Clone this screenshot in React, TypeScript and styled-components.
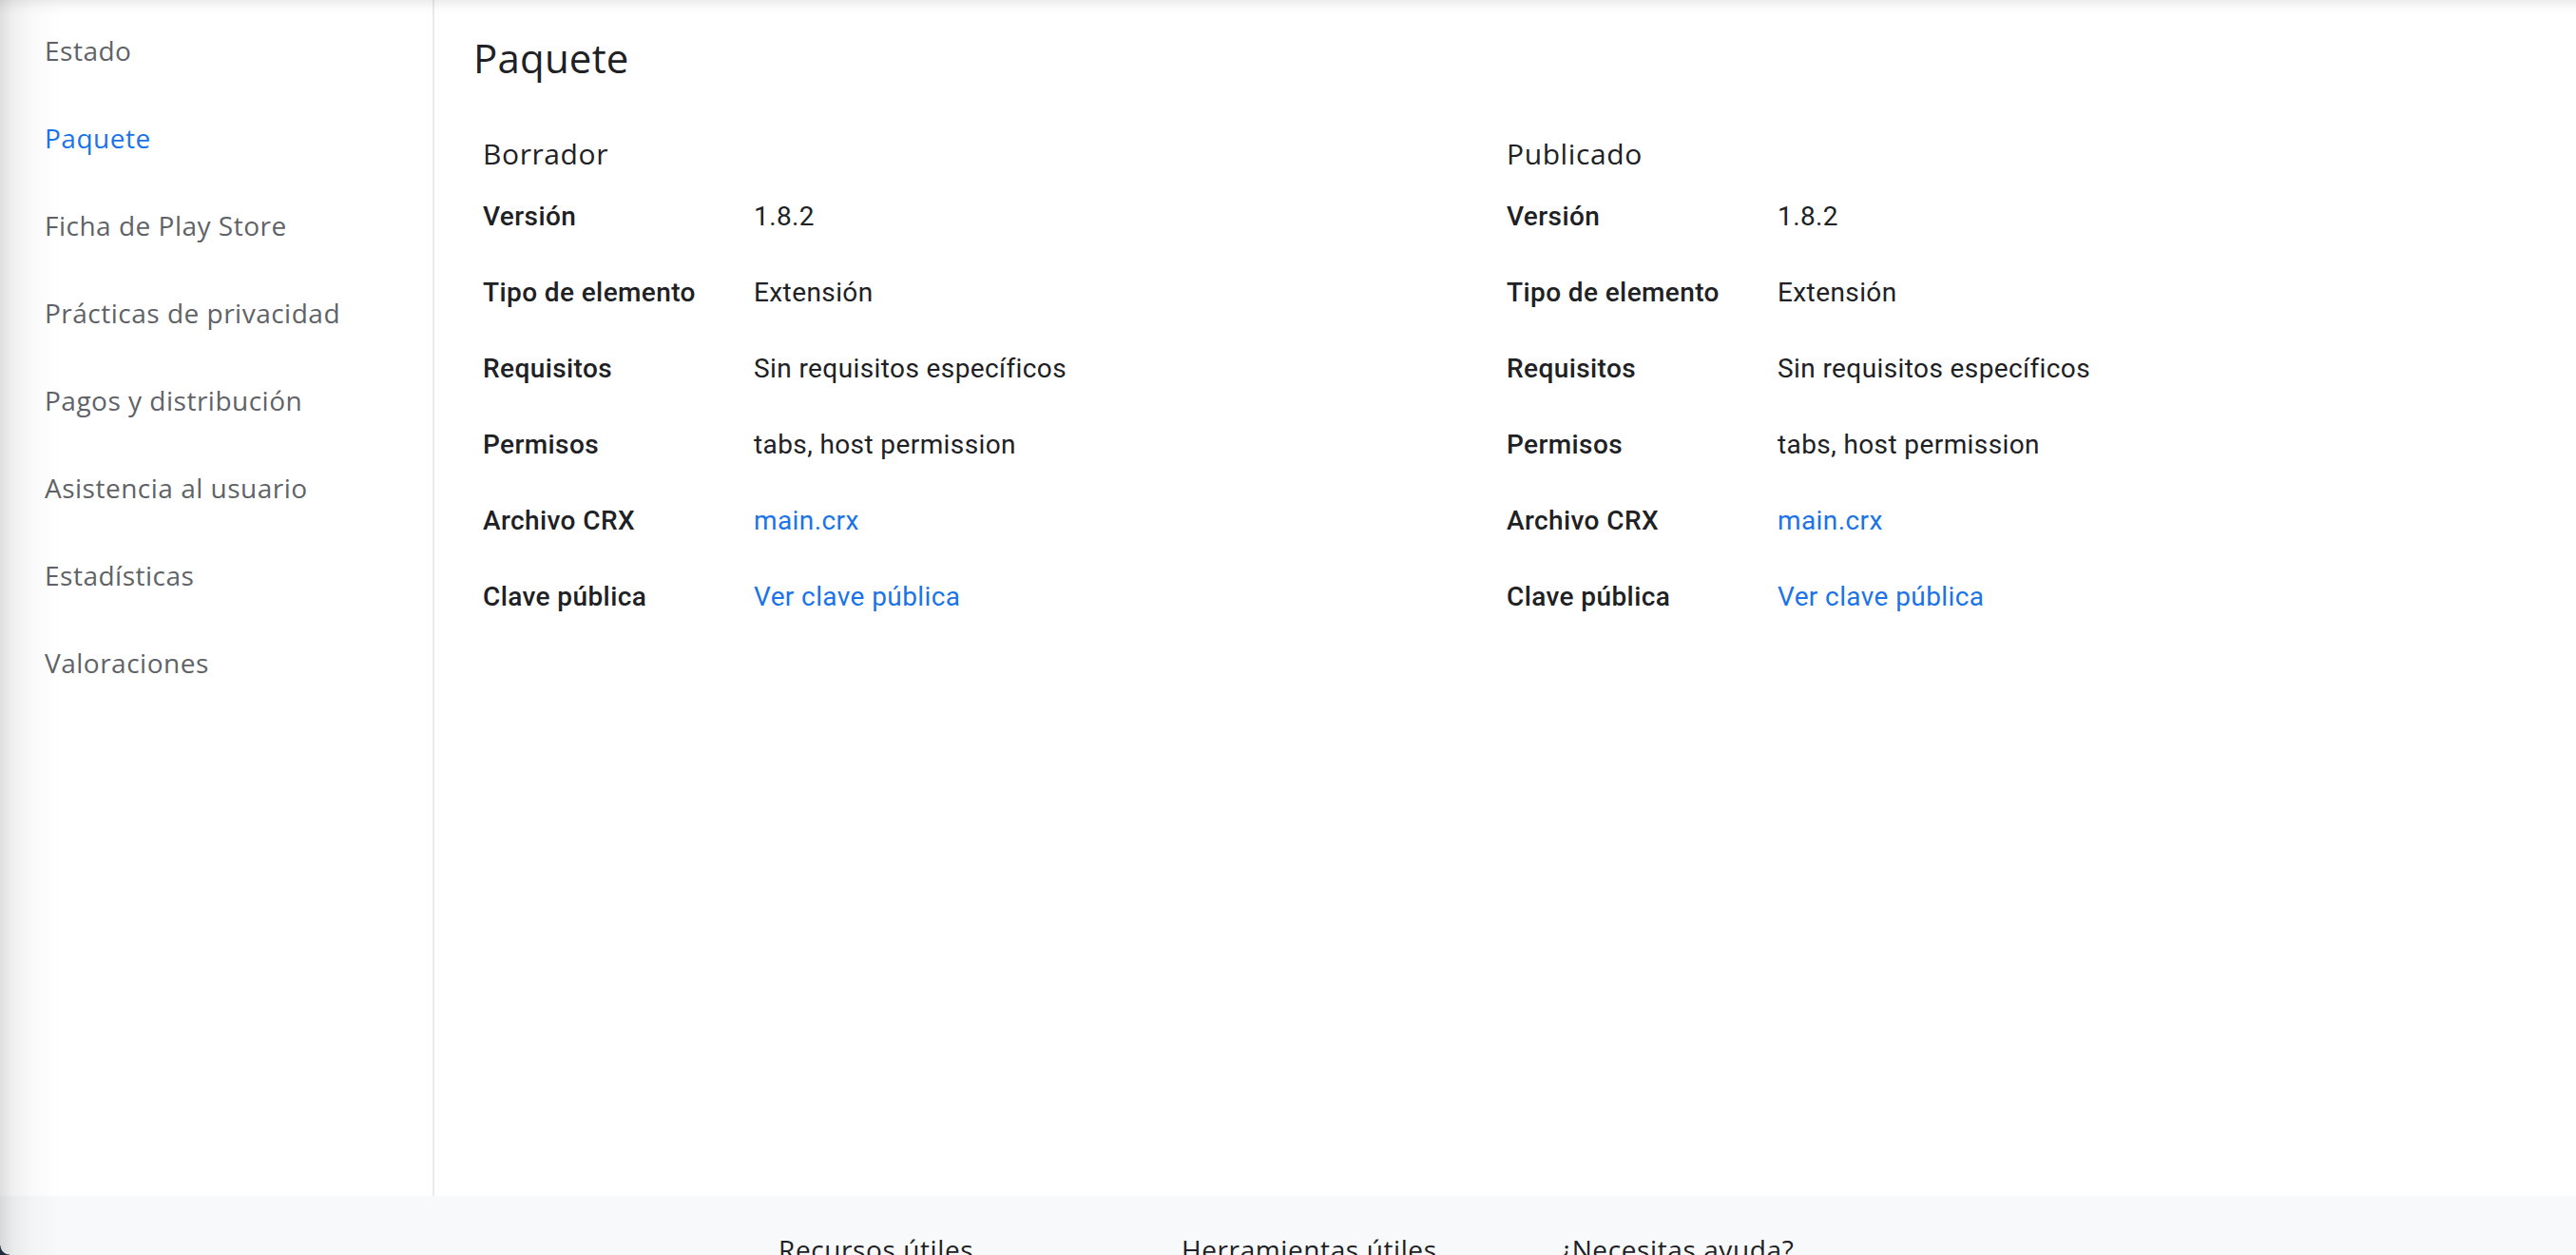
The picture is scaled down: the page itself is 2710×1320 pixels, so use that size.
import React from "react";
import styled, { createGlobalStyle } from "styled-components";

const Global = createGlobalStyle`
  html, body {
    margin: 0;
    padding: 0;
    background: #ffffff;
    overflow: hidden;
  }
  * { box-sizing: border-box; }
`;

const Page = styled.div`
  position: relative;
  width: 2710px;
  height: 1320px;
  display: flex;
  flex-direction: column;
  background: #ffffff;
  overflow: hidden;
  font-family: Roboto, "Liberation Sans", sans-serif;

  &::before {
    content: "";
    position: absolute;
    left: 0;
    top: 0;
    bottom: 0;
    width: 70px;
    background: linear-gradient(
      to right,
      rgba(0, 0, 0, 0.13) 0px,
      rgba(0, 0, 0, 0.06) 14px,
      rgba(0, 0, 0, 0.02) 35px,
      rgba(0, 0, 0, 0) 65px
    );
    pointer-events: none;
    z-index: 5;
  }

  &::after {
    content: "";
    position: absolute;
    left: 0;
    right: 0;
    top: 0;
    height: 16px;
    background: linear-gradient(
      to bottom,
      rgba(0, 0, 0, 0.07),
      rgba(0, 0, 0, 0.02) 9px,
      rgba(0, 0, 0, 0)
    );
    pointer-events: none;
    z-index: 5;
  }
`;

const Body = styled.div`
  display: flex;
  height: 1258px;
  flex: none;
`;

const Sidebar = styled.nav`
  width: 457px;
  flex: none;
  border-right: 2px solid #e8eaed;
  padding-top: 7px;
  display: flex;
  flex-direction: column;
`;

const NavItem = styled.a<{ $active?: boolean }>`
  display: block;
  padding-left: 47px;
  height: 92px;
  line-height: 92px;
  font-family: "Open Sans", Roboto, sans-serif;
  font-size: 28px;
  font-weight: 500;
  letter-spacing: 0.5px;
  color: ${(p) => (p.$active ? "#1a73e8" : "#5f6368")};
  text-decoration: none;
  white-space: nowrap;
`;

const Main = styled.main`
  flex: 1;
  padding: 0 48px 0 41px;
  display: flex;
  flex-direction: column;
`;

const Heading = styled.h1`
  margin: 0;
  padding-top: 35px;
  font-family: "Open Sans", Roboto, sans-serif;
  font-weight: 400;
  font-size: 42px;
  line-height: 52px;
  letter-spacing: 0.2px;
  color: #202124;
`;

const Columns = styled.div`
  display: grid;
  grid-template-columns: 1fr 1fr;
  margin-left: 10px;
  margin-top: 55px;
`;

const Column = styled.section`
  display: flex;
  flex-direction: column;
`;

const ColumnTitle = styled.h2`
  margin: 0 0 5px 0;
  font-family: "Open Sans", Roboto, sans-serif;
  font-weight: 500;
  font-size: 30px;
  line-height: 40px;
  letter-spacing: 0.6px;
  color: #202124;
`;

const Row = styled.div`
  display: grid;
  grid-template-columns: 285px 1fr;
  height: 80px;
  align-items: center;
`;

const Label = styled.div`
  font-family: Roboto, sans-serif;
  font-weight: 500;
  font-size: 28px;
  color: #202124;
  letter-spacing: 0.4px;
  white-space: nowrap;
`;

const Value = styled.div`
  font-family: Roboto, sans-serif;
  font-weight: 400;
  font-size: 28px;
  color: #202124;
  letter-spacing: 0.4px;
  white-space: nowrap;
`;

const Link = styled.a`
  color: #1a73e8;
  text-decoration: none;
`;

const Footer = styled.footer`
  flex: none;
  height: 62px;
  background: #f8f9fa;
  display: flex;
  padding-left: 819px;
  padding-top: 38px;
`;

const FooterCol = styled.div<{ $w: number }>`
  width: ${(p) => p.$w}px;
  font-family: "Open Sans", Roboto, sans-serif;
  font-size: 28px;
  line-height: 36px;
  letter-spacing: 0.6px;
  color: #202124;
  white-space: nowrap;
`;

const Corner = styled.div`
  position: absolute;
  left: 0;
  bottom: 0;
  width: 10px;
  height: 10px;
  background: radial-gradient(circle at 100% 0%, transparent 9px, #1f2d3d 10px);
  z-index: 6;
`;

const nav = [
  "Estado",
  "Paquete",
  "Ficha de Play Store",
  "Prácticas de privacidad",
  "Pagos y distribución",
  "Asistencia al usuario",
  "Estadísticas",
  "Valoraciones",
];

type Item = { label: string; value: string; link?: boolean };

const rows: Item[] = [
  { label: "Versión", value: "1.8.2" },
  { label: "Tipo de elemento", value: "Extensión" },
  { label: "Requisitos", value: "Sin requisitos específicos" },
  { label: "Permisos", value: "tabs, host permission" },
  { label: "Archivo CRX", value: "main.crx", link: true },
  { label: "Clave pública", value: "Ver clave pública", link: true },
];

const Details: React.FC<{ title: string }> = ({ title }) => (
  <Column>
    <ColumnTitle>{title}</ColumnTitle>
    {rows.map((r) => (
      <Row key={r.label}>
        <Label>{r.label}</Label>
        <Value>{r.link ? <Link href="#">{r.value}</Link> : r.value}</Value>
      </Row>
    ))}
  </Column>
);

export default function App() {
  return (
    <Page>
      <Global />
      <Body>
        <Sidebar>
          {nav.map((n) => (
            <NavItem key={n} href="#" $active={n === "Paquete"}>
              {n}
            </NavItem>
          ))}
        </Sidebar>
        <Main>
          <Heading>Paquete</Heading>
          <Columns>
            <Details title="Borrador" />
            <Details title="Publicado" />
          </Columns>
        </Main>
      </Body>
      <Footer>
        <FooterCol $w={424}>Recursos útiles</FooterCol>
        <FooterCol $w={398}>Herramientas útiles</FooterCol>
        <FooterCol $w={400}>¿Necesitas ayuda?</FooterCol>
      </Footer>
      <Corner />
    </Page>
  );
}
